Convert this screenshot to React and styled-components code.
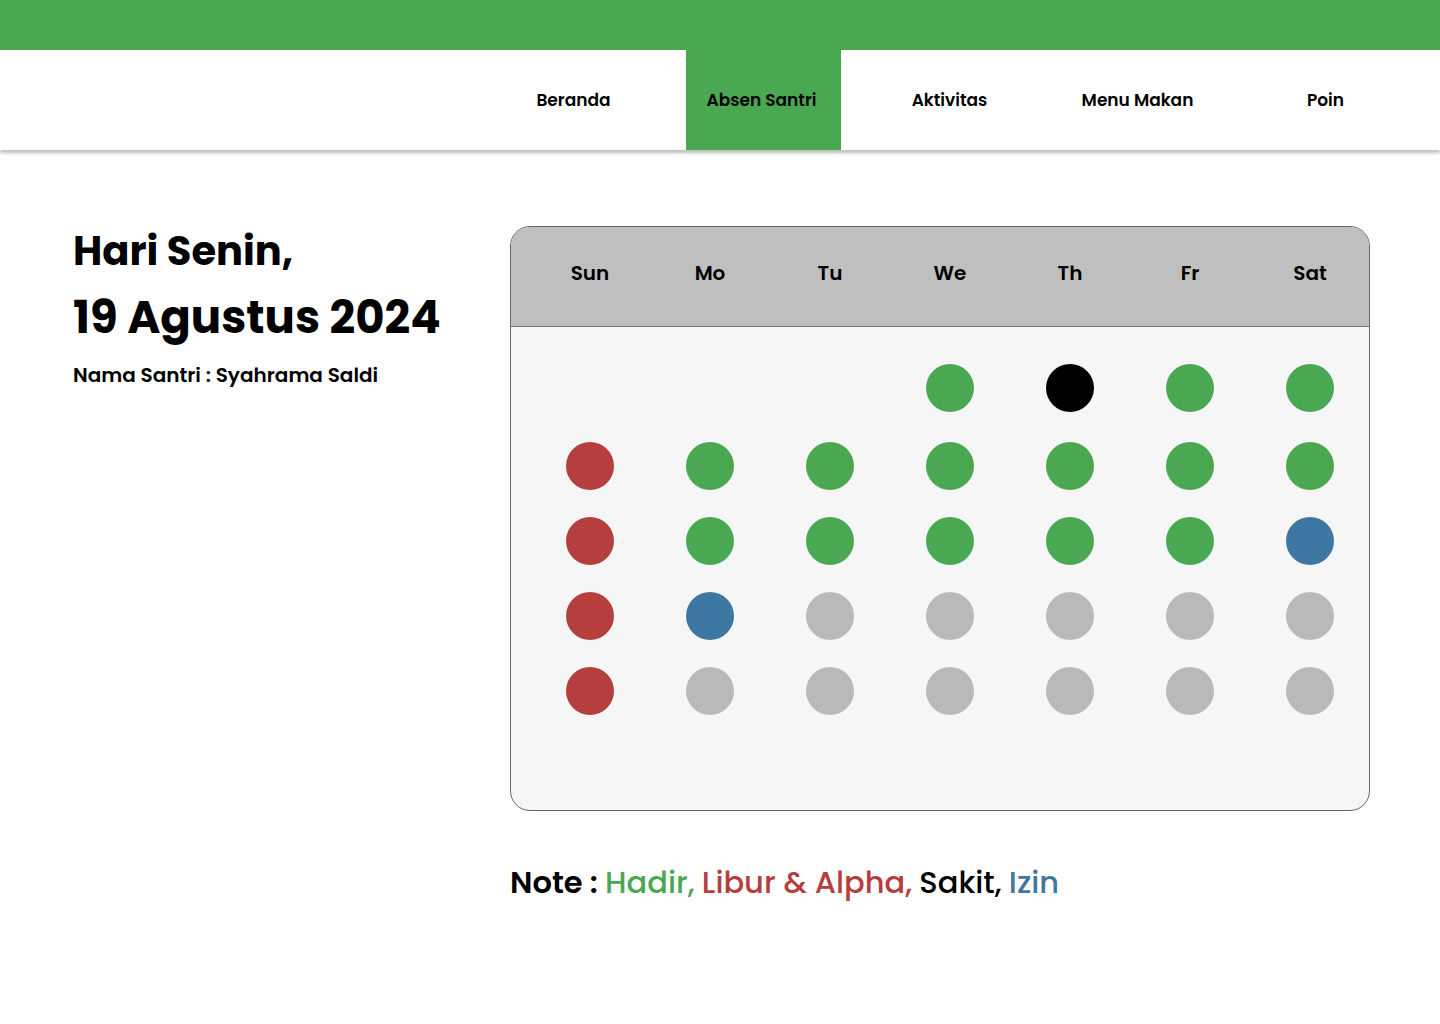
import React from "react";
import styled, { createGlobalStyle } from "styled-components";

const GREEN = "#4aa853";
const RED = "#b53e3e";
const BLUE = "#3f77a3";
const GRAY = "#b9b9b9";

const Global = createGlobalStyle`
  body {
    margin: 0;
    background: #fff;
    font-family: "Poppins", "DejaVu Sans", sans-serif;
    color: #000;
  }
`;

const TopBar = styled.div`
  height: 50px;
  background: ${GREEN};
`;

const Nav = styled.nav`
  height: 100px;
  background: #fff;
  box-shadow: 0 3px 3px rgba(0, 0, 0, 0.25);
  display: flex;
  justify-content: flex-end;
  padding-right: 35px;
  gap: 33px;
`;

const NavItem = styled.a`
  width: 155px;
  box-sizing: border-box;
  padding-right: 4px;
  display: flex;
  align-items: center;
  justify-content: center;
  font-size: 17px;
  font-weight: 600;
  color: #000;
  background: ${p => (p.active ? GREEN : "transparent")};
  text-decoration: none;
`;

const Main = styled.main`
  display: grid;
  grid-template-columns: 437px 860px;
  padding: 76px 0 0 73px;
`;

const Info = styled.div`
  padding-top: 3px;
`;

const Day = styled.h1`
  margin: 0;
  font-size: 40px;
  font-weight: 700;
  line-height: 44px;
`;

const DateLine = styled.h1`
  margin: 20px 0 0;
  font-size: 45px;
  font-weight: 700;
  line-height: 50px;
`;

const Name = styled.div`
  margin-top: 17px;
  font-size: 20px;
  font-weight: 600;
`;

const Calendar = styled.div`
  height: 583px;
  border: 1px solid #666;
  border-radius: 20px;
  background: #f6f6f6;
  overflow: hidden;
  display: flex;
  flex-direction: column;
`;

const Header = styled.div`
  height: 100px;
  box-sizing: border-box;
  background: #bfbfbf;
  border-bottom: 1px solid #777;
  display: grid;
  grid-template-columns: repeat(7, 120px);
  padding: 34px 0 0 19px;
`;

const DayName = styled.div`
  text-align: center;
  font-size: 20px;
  font-weight: 600;
  line-height: 24px;
`;

const Grid = styled.div`
  display: grid;
  grid-template-columns: repeat(7, 120px);
  grid-template-rows: 78px repeat(4, 75px);
  padding: 37px 0 0 19px;
`;

const Cell = styled.div`
  display: flex;
  justify-content: center;
`;

const Dot = styled.span`
  width: 48px;
  height: 48px;
  border-radius: 50%;
  background: ${p => p.color};
`;

const Note = styled.p`
  grid-column: 2;
  margin: 52px 0 0;
  font-size: 30.5px;
  font-weight: 600;
  line-height: 40px;
`;

const Tag = styled.span`
  color: ${p => p.color};
  font-weight: 500;
`;

const C = { g: GREEN, r: RED, b: BLUE, x: GRAY, k: "#000" };

const weeks = [
  "...gkgg",
  "rgggggg",
  "rgggggb",
  "rbxxxxx",
  "rxxxxxx",
];

const days = ["Sun", "Mo", "Tu", "We", "Th", "Fr", "Sat"];
const menu = ["Beranda", "Absen Santri", "Aktivitas", "Menu Makan", "Poin"];

export default function App() {
  return (
    <>
      <Global />
      <TopBar />
      <Nav>
        {menu.map(m => (
          <NavItem key={m} active={m === "Absen Santri" ? 1 : 0}>
            {m}
          </NavItem>
        ))}
      </Nav>
      <Main>
        <Info>
          <Day>Hari Senin,</Day>
          <DateLine>19 Agustus 2024</DateLine>
          <Name>Nama Santri : Syahrama Saldi</Name>
        </Info>
        <Calendar>
          <Header>
            {days.map(d => (
              <DayName key={d}>{d}</DayName>
            ))}
          </Header>
          <Grid>
            {weeks.map((w, i) =>
              w.split("").map((c, j) => (
                <Cell key={`${i}-${j}`}>
                  {c !== "." && <Dot color={C[c]} />}
                </Cell>
              ))
            )}
          </Grid>
        </Calendar>
        <Note>
          Note : <Tag color={GREEN}>Hadir,</Tag> <Tag color={RED}>Libur &amp; Alpha,</Tag>{" "}
          <Tag color="#000">Sakit,</Tag> <Tag color={BLUE}>Izin</Tag>
        </Note>
      </Main>
    </>
  );
}
